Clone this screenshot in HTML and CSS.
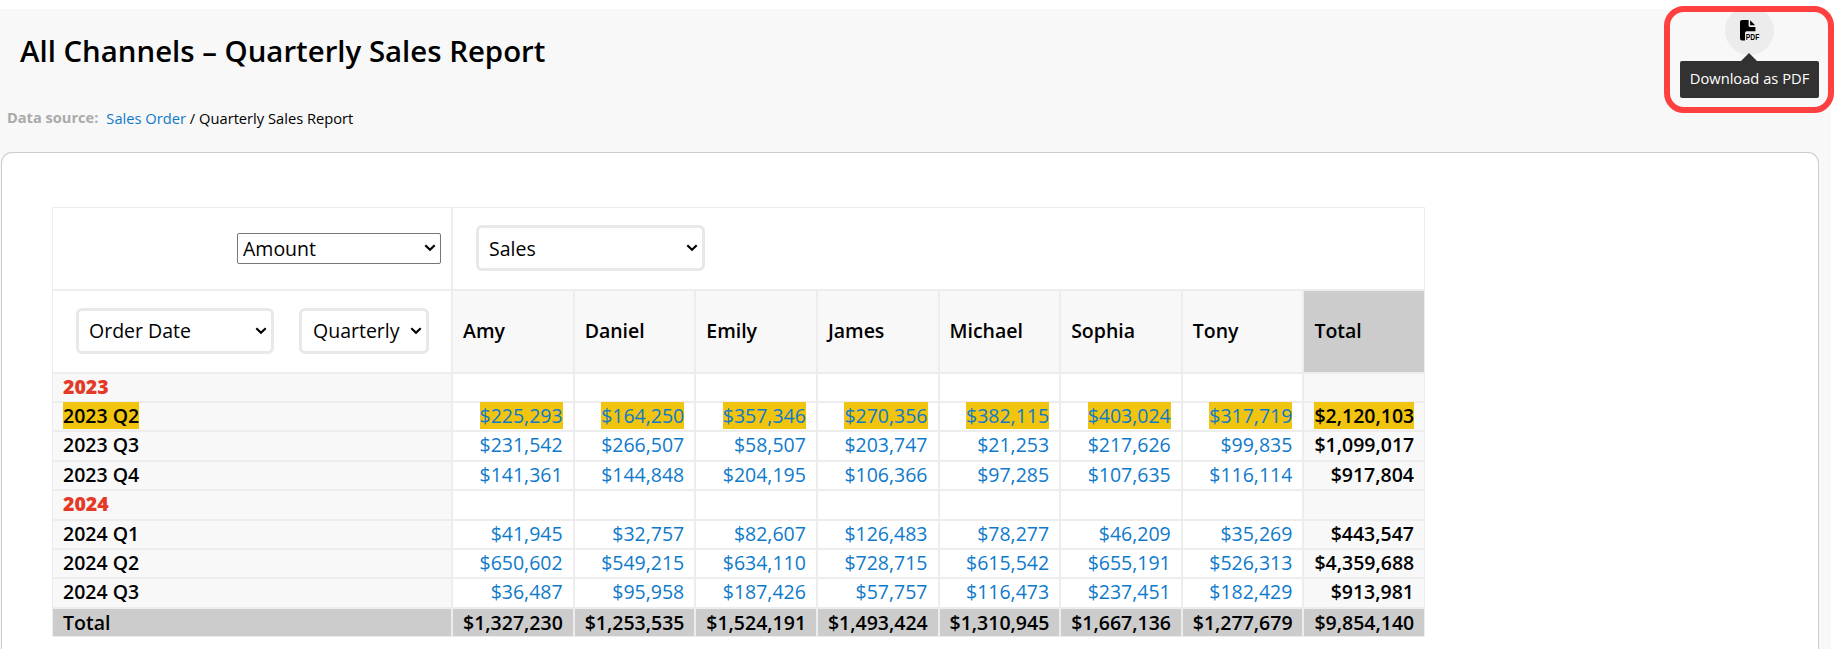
FILE: index.html
```
<!DOCTYPE html>
<html lang="en">
  <head>
    <meta charset="UTF-8" />
    <meta name="viewport" content="width=device-width, initial-scale=1.0" />
    <title>Quarterly Sales Report</title>
    <link rel="stylesheet" href="styles.css">
  </head>
  <body>
    <div class="page">
      <header class="page-header">
        <h1>All Channels – Quarterly Sales Report</h1>
        <div class="highlight-box">
          <button class="pdf-btn" aria-label="Download as PDF">
            <svg width="20" height="22" viewBox="0 0 20 22">
              <path d="M2 0h6.600v5.500q0 1.500 1.500 1.500h5.300v4.200H6.700q-1.700 0-1.700 1.700v7.600H2q-2 0-2-2V2Q0 0 2 0z" />
              <path d="M10.100 0.300l5 5h-5z" />
              <text x="5.700" y="20" textLength="13.600" lengthAdjust="spacingAndGlyphs">PDF</text>
            </svg>
          </button>
          <span class="tooltip">Download as PDF</span>
        </div>
      </header>

      <nav class="source">
        <b>Data source:</b>
        <span><a href="#">Sales Order</a> / Quarterly Sales Report</span>
      </nav>

      <main class="card">
        <table class="report">
          <colgroup>
            <col class="col-label">
            <col span="8" class="col-value">
          </colgroup>
          <thead>
            <tr class="row-fields">
              <td>
                <div class="fields fields-right">
                  <div class="select plain">
                    <select><option>Amount</option></select>
                    <svg width="12" height="8" viewBox="0 0 12 8"><path d="M1.300 1.300L6 5.700l4.700-4.400" /></svg>
                  </div>
                </div>
              </td>
              <td colspan="8">
                <div class="fields">
                  <div class="select sales">
                    <select><option>Sales</option></select>
                    <svg width="12" height="8" viewBox="0 0 12 8"><path d="M1.300 1.300L6 5.700l4.700-4.400" /></svg>
                  </div>
                </div>
              </td>
            </tr>
            <tr class="row-names">
              <td>
                <div class="fields">
                  <div class="select date">
                    <select><option>Order Date</option></select>
                    <svg width="12" height="8" viewBox="0 0 12 8"><path d="M1.300 1.300L6 5.700l4.700-4.400" /></svg>
                  </div>
                  <div class="select period">
                    <select><option>Quarterly</option></select>
                    <svg width="12" height="8" viewBox="0 0 12 8"><path d="M1.300 1.300L6 5.700l4.700-4.400" /></svg>
                  </div>
                </div>
              </td>
              <th>Amy</th>
              <th>Daniel</th>
              <th>Emily</th>
              <th>James</th>
              <th>Michael</th>
              <th>Sophia</th>
              <th>Tony</th>
              <th class="total">Total</th>
            </tr>
          </thead>
          <tbody>
            <tr class="year"><th>2023</th><td></td><td></td><td></td><td></td><td></td><td></td><td></td><td></td></tr>
            <tr class="marked">
              <th><span>2023 Q2</span></th>
              <td><a href="#">$225,293</a></td>
              <td><a href="#">$164,250</a></td>
              <td><a href="#">$357,346</a></td>
              <td><a href="#">$270,356</a></td>
              <td><a href="#">$382,115</a></td>
              <td><a href="#">$403,024</a></td>
              <td><a href="#">$317,719</a></td>
              <td><span>$2,120,103</span></td>
            </tr>
            <tr>
              <th>2023 Q3</th>
              <td><a href="#">$231,542</a></td>
              <td><a href="#">$266,507</a></td>
              <td><a href="#">$58,507</a></td>
              <td><a href="#">$203,747</a></td>
              <td><a href="#">$21,253</a></td>
              <td><a href="#">$217,626</a></td>
              <td><a href="#">$99,835</a></td>
              <td>$1,099,017</td>
            </tr>
            <tr>
              <th>2023 Q4</th>
              <td><a href="#">$141,361</a></td>
              <td><a href="#">$144,848</a></td>
              <td><a href="#">$204,195</a></td>
              <td><a href="#">$106,366</a></td>
              <td><a href="#">$97,285</a></td>
              <td><a href="#">$107,635</a></td>
              <td><a href="#">$116,114</a></td>
              <td>$917,804</td>
            </tr>
            <tr class="year"><th>2024</th><td></td><td></td><td></td><td></td><td></td><td></td><td></td><td></td></tr>
            <tr>
              <th>2024 Q1</th>
              <td><a href="#">$41,945</a></td>
              <td><a href="#">$32,757</a></td>
              <td><a href="#">$82,607</a></td>
              <td><a href="#">$126,483</a></td>
              <td><a href="#">$78,277</a></td>
              <td><a href="#">$46,209</a></td>
              <td><a href="#">$35,269</a></td>
              <td>$443,547</td>
            </tr>
            <tr>
              <th>2024 Q2</th>
              <td><a href="#">$650,602</a></td>
              <td><a href="#">$549,215</a></td>
              <td><a href="#">$634,110</a></td>
              <td><a href="#">$728,715</a></td>
              <td><a href="#">$615,542</a></td>
              <td><a href="#">$655,191</a></td>
              <td><a href="#">$526,313</a></td>
              <td>$4,359,688</td>
            </tr>
            <tr>
              <th>2024 Q3</th>
              <td><a href="#">$36,487</a></td>
              <td><a href="#">$95,958</a></td>
              <td><a href="#">$187,426</a></td>
              <td><a href="#">$57,757</a></td>
              <td><a href="#">$116,473</a></td>
              <td><a href="#">$237,451</a></td>
              <td><a href="#">$182,429</a></td>
              <td>$913,981</td>
            </tr>
          </tbody>
          <tfoot>
            <tr>
              <th>Total</th>
              <td>$1,327,230</td>
              <td>$1,253,535</td>
              <td>$1,524,191</td>
              <td>$1,493,424</td>
              <td>$1,310,945</td>
              <td>$1,667,136</td>
              <td>$1,277,679</td>
              <td>$9,854,140</td>
            </tr>
          </tfoot>
        </table>
      </main>
    </div>
  </body>
</html>
```
FILE: styles.css
```
* {
  box-sizing: border-box;
}

body {
  margin: 0;
  padding-top: 9px;
  background: #fff;
  color: #000;
  font-family: "Open Sans", "Noto Sans", sans-serif;
  font-size: 19.5px;
}

a {
  color: #0f7acb;
  text-decoration: none;
}

.page {
  width: 1831px;
  height: 640px;
  background: #f8f8f8;
}

.page-header {
  position: relative;
  height: 84px;
  padding: 21px 0 0 20px;
}

h1 {
  margin: 0;
  font-size: 29.4px;
  font-weight: 600;
  line-height: 42px;
}

/* download button and its callout */
.highlight-box {
  position: absolute;
  top: -3px;
  left: 1664px;
  width: 170px;
  height: 107px;
  border: 6px solid #ff4040;
  border-radius: 20px;
  overflow: hidden;
}

.pdf-btn {
  position: absolute;
  top: -6px;
  left: 55px;
  width: 49px;
  height: 49px;
  padding: 0;
  border: none;
  border-radius: 50%;
  background: #ececec;
}

.pdf-btn svg {
  position: absolute;
  top: 14px;
  left: 15px;
  overflow: visible;
}

.pdf-btn text {
  font: bold 9.5px "Liberation Sans", sans-serif;
}

.tooltip {
  position: absolute;
  top: 49px;
  left: 10px;
  width: 139px;
  height: 37px;
  border-radius: 2px;
  background: #323232;
  color: #fff;
  font-size: 14.7px;
  line-height: 35px;
  text-align: center;
  white-space: nowrap;
}

.tooltip::before {
  content: "";
  position: absolute;
  top: -8px;
  left: 61px;
  border: 8px solid transparent;
  border-top: none;
  border-bottom-color: #323232;
}

.source {
  display: flex;
  gap: 8px;
  height: 59px;
  padding: 14px 0 0 7px;
  font-size: 14.7px;
  line-height: 22px;
}

.source b {
  color: #aaa;
  font-size: 14.6px;
  line-height: 21px;
}

.card {
  width: 1818px;
  height: 497px;
  margin-left: 1px;
  padding: 54px 0 0 50px;
  border: 1px solid #ccc;
  border-bottom: none;
  border-radius: 11px 11px 0 0;
  background: #fff;
}

.report {
  width: 1373px;
  border-collapse: separate;
  border-spacing: 0;
  table-layout: fixed;
}

.col-label {
  width: 400px;
}

.report th,
.report td {
  height: 29.4px;
  padding: 0 10px;
  border: 1px solid #ededed;
  line-height: 27.4px;
  text-align: right;
}

.report th {
  background: #f8f8f8;
  font-weight: 600;
  text-align: left;
}

.report tbody th,
.report tbody td {
  padding-bottom: 0.8px;
  line-height: 26.6px;
}

.report .row-fields td {
  height: 82.5px;
}

.report .row-names td,
.report .row-names th {
  height: 83.2px;
}

.report tbody td:last-child {
  background: #f8f8f8;
  font-weight: 600;
}

.report tfoot th,
.report tfoot td,
.report .row-names .total {
  background: #ccc;
  font-weight: 600;
}

.report .year th {
  color: #e53927;
  font-weight: 800;
}

.marked span,
.marked a {
  background: #f1c40f;
}

.fields {
  display: flex;
  justify-content: space-between;
  padding: 0 12px 0 13px;
}

.fields-right {
  justify-content: flex-end;
  padding: 0;
}

.select {
  position: relative;
  height: 46px;
}

.select select {
  width: 100%;
  height: 100%;
  padding: 0 0 0 10px;
  border: 3px solid #e8e8e8;
  border-radius: 6px;
  appearance: none;
  background: #fff;
  color: #000;
  font: inherit;
}

.select svg {
  position: absolute;
  top: 50%;
  right: 7px;
  margin-top: -4px;
  fill: none;
  stroke: #000;
  stroke-width: 2.2;
}

.plain {
  width: 204px;
  height: 31px;
}

.plain select {
  padding-left: 5px;
  border: 1px solid #767676;
  border-radius: 2px;
}

.plain svg {
  right: 5px;
}

.sales {
  width: 229px;
}

.date {
  width: 198px;
}

.period {
  width: 130px;
}

.period select {
  padding-left: 11px;
}
```
